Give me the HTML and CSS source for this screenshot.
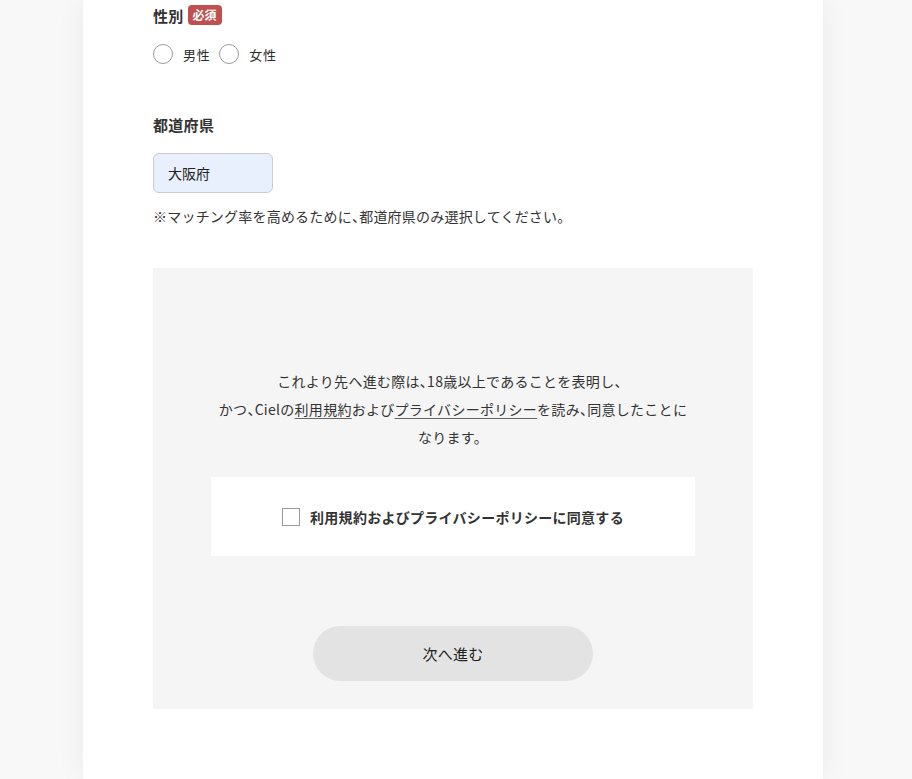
FILE: index.html
```html
<!DOCTYPE html>
<html lang="ja">
<head>
<meta charset="utf-8">
<title>登録</title>
<link rel="stylesheet" href="styles.css">
</head>
<body>
<div class="page">
  <main class="card">
    <section class="field field-gender">
      <div class="label-row">
        <span class="label">性別</span>
        <span class="badge">必須</span>
      </div>
      <div class="radios">
        <label class="radio"><span class="radio-dot"></span><span class="radio-text">男性</span></label>
        <label class="radio"><span class="radio-dot"></span><span class="radio-text">女性</span></label>
      </div>
    </section>

    <section class="field field-pref">
      <div class="label-row">
        <span class="label">都道府県</span>
      </div>
      <div class="select">大阪府</div>
      <p class="note">※マッチング率を高めるために<span class="punct">、</span>都道府県のみ選択してください。</p>
    </section>

    <section class="panel">
      <p class="consent-text">これより先へ進む際は<span class="punct">、</span>18歳以上であることを表明し、<br>かつ<span class="punct">、</span>Cielの<a class="link" href="#">利用規約</a>および<a class="link" href="#">プライバシーポリシー</a>を読み<span class="punct">、</span>同意したことに<br>なります。</p>
      <div class="agree-box">
        <label class="agree"><span class="checkbox"></span><span class="agree-text">利用規約およびプライバシーポリシーに同意する</span></label>
      </div>
      <div class="actions">
        <button class="next-btn" type="button">次へ進む</button>
      </div>
    </section>
  </main>
</div>
</body>
</html>
```

FILE: styles.css
```css
* { box-sizing: border-box; }

html, body {
  margin: 0;
  padding: 0;
}

body {
  background: #f8f8f8;
  font-family: "Noto Sans CJK JP", "Noto Sans", sans-serif;
  color: #333333;
  font-size: 14px;
  overflow: hidden;
}

.page {
  padding: 0 89px 0 83px;
}

.card {
  width: 740px;
  background: #ffffff;
  padding: 0 70px 70px;
  box-shadow: 0 0 28px rgba(0, 0, 0, 0.06);
}

.label-row {
  height: 30px;
  display: flex;
  align-items: center;
  gap: 4px;
}

.label {
  font-size: 15px;
  font-weight: 700;
  color: #333333;
  letter-spacing: 0.02em;
}

.badge {
  display: inline-flex;
  align-items: center;
  justify-content: center;
  width: 34px;
  height: 20px;
  border-radius: 4px;
  background: #c04f4f;
  color: #ffffff;
  font-size: 12px;
  font-weight: 700;
  line-height: 1;
}

.radios {
  display: flex;
  align-items: center;
  margin-top: 14px;
  height: 20px;
  gap: 9px;
}

.radio {
  display: flex;
  align-items: center;
  gap: 10px;
}

.radio-dot {
  width: 20px;
  height: 20px;
  border: 1px solid #9a9a9a;
  border-radius: 50%;
  background: #ffffff;
}

.radio-text {
  font-size: 13px;
  letter-spacing: 0.05em;
  color: #2b2b2b;
}

.field-pref {
  margin-top: 45px;
}

.select {
  margin-top: 14px;
  width: 120px;
  height: 40px;
  border: 1px solid #c8ccd3;
  border-radius: 6px;
  background: #e8f0fe;
  padding-left: 14px;
  display: flex;
  align-items: center;
  font-size: 14px;
  color: #222222;
}

.note {
  margin: 11px 0 0;
  line-height: 24px;
  font-size: 14px;
  letter-spacing: 0.015em;
}

.punct {
  font-feature-settings: "halt";
}

.panel {
  margin-top: 40px;
  background: #f5f5f5;
  padding: 99px 58px 28px;
}

.consent-text {
  margin: 0;
  text-align: center;
  line-height: 28px;
  font-size: 14px;
  letter-spacing: 0.02em;
}

.link {
  color: #333333;
  text-decoration: underline;
  text-underline-offset: 3px;
  text-decoration-color: #666666;
}

.agree-box {
  margin-top: 26px;
  height: 79px;
  background: #ffffff;
  display: flex;
  align-items: center;
  justify-content: center;
}

.agree {
  display: flex;
  align-items: center;
  gap: 10px;
}

.checkbox {
  width: 18px;
  height: 18px;
  border: 1px solid #9a9a9a;
  background: #ffffff;
}

.agree-text {
  font-weight: 700;
  font-size: 14px;
  letter-spacing: 0.02em;
}

.actions {
  margin-top: 70px;
  display: flex;
  justify-content: center;
}

.next-btn {
  width: 280px;
  height: 55px;
  border: none;
  border-radius: 28px;
  background: #e3e3e3;
  font-family: inherit;
  font-size: 15px;
  color: #1f1f1f;
  letter-spacing: 0.02em;
}
```
